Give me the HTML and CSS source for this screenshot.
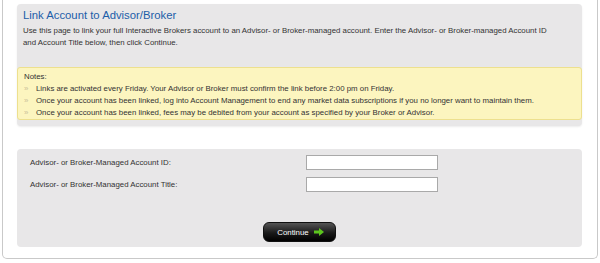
FILE: index.html
```html
<!DOCTYPE html>
<html lang="en">
<head>
  <meta charset="UTF-8">
  <title>Link Account to Advisor/Broker</title>
  <link rel="stylesheet" href="styles.css">
</head>
<body>
  <div class="frame">
    <!-- Intro panel -->
    <div class="panel intro">
      <h1>Link Account to Advisor/Broker</h1>
      <p class="lead">Use this page to link your full Interactive Brokers account to an Advisor- or Broker-managed account. Enter the Advisor- or Broker-managed Account ID<br>and Account Title below, then click Continue.</p>
      <div class="notes">
        <p>Notes:</p>
        <ul>
          <li>Links are activated every Friday. Your Advisor or Broker must confirm the link before 2:00 pm on Friday.</li>
          <li>Once your account has been linked, log into Account Management to end any market data subscriptions if you no longer want to maintain them.</li>
          <li>Once your account has been linked, fees may be debited from your account as specified by your Broker or Advisor.</li>
        </ul>
      </div>
    </div>

    <!-- Form panel -->
    <div class="panel form">
      <div class="row">
        <label for="acctId">Advisor- or Broker-Managed Account ID:</label>
        <input type="text" id="acctId">
      </div>
      <div class="row">
        <label for="acctTitle">Advisor- or Broker-Managed Account Title:</label>
        <input type="text" id="acctTitle">
      </div>
      <div class="actions">
        <button class="continue-btn">Continue
          <svg width="10" height="8" viewBox="0 0 10 8"><path d="M0 2.5h5V0l5 4-5 4V5.5H0z" fill="#5cc61e"/></svg>
        </button>
      </div>
    </div>
  </div>
</body>
</html>
```

FILE: styles.css
```css
body {
  margin: 0;
  background: #ffffff;
  font-family: 'Liberation Sans', Arial, sans-serif;
  font-size: 7.85px;
  color: #333333;
}

.frame {
  margin: 0 2px;
  height: 259px;
  box-sizing: border-box;
  padding: 4px 15px 0 14px;
  border: 1px solid #c9c9c9;
  border-top: none;
  border-radius: 0 0 5px 5px;
}

.panel {
  background: #e8e7e8;
  border-radius: 4px;
}

.intro {
  padding-bottom: 6px;
  box-shadow: 0 1px 2px rgba(0,0,0,0.08);
}

.intro h1 {
  margin: 0;
  padding: 4px 6px 0;
  font-size: 11.3px;
  font-weight: normal;
  color: #1c5ea8;
  line-height: 14px;
}

.lead {
  margin: 0;
  padding: 3px 6px 0;
  height: 42px;
  line-height: 12px;
}

.notes {
  background: #fcf5bf;
  border: 1px solid #ede08e;
  border-radius: 3px;
  padding: 3px 6px 0;
  line-height: 12px;
}

.notes p {
  margin: 0;
}

.notes ul {
  margin: 0;
  padding: 0;
  list-style: none;
}

.notes li::before {
  content: "\00bb";
  display: inline-block;
  width: 12px;
  color: #c9c09a;
}

.form {
  margin-top: 23px;
  height: 98px;
  box-sizing: border-box;
  padding: 2px 0 0 13px;
}

.row {
  display: flex;
  align-items: center;
  height: 22px;
}

.row label {
  width: 276px;
}

.row input {
  width: 132px;
  height: 15px;
  box-sizing: border-box;
  border: 1px solid #a9a9a9;
  background: #ffffff;
  padding: 0 2px;
}

.actions {
  display: flex;
  justify-content: center;
  padding: 27px 13px 0 0;
}

.continue-btn {
  display: flex;
  align-items: center;
  gap: 5px;
  height: 20px;
  padding: 0 11px 0 13px;
  border: 1px solid #111111;
  border-radius: 6px;
  background: linear-gradient(#555555, #1a1a1a 55%, #000000);
  color: #ffffff;
  font-family: 'Liberation Sans', Arial, sans-serif;
  font-size: 7.85px;
  cursor: pointer;
}
```
